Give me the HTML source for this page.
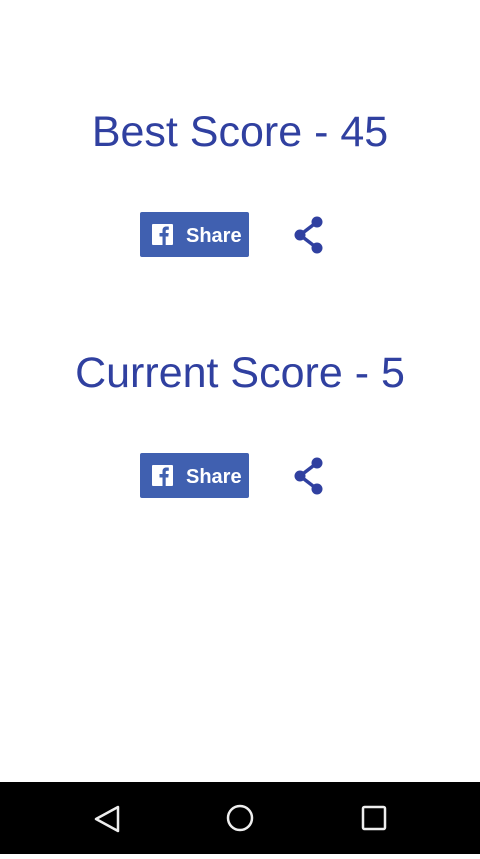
<!DOCTYPE html>
<html><head><style>
body{margin:0;width:480px;height:854px;background:#fff;position:relative;overflow:hidden;font-family:"Liberation Sans",Roboto,sans-serif}
.t{position:absolute;left:0;width:480px;text-align:center;color:#3040a0;font-size:43px;line-height:50px;letter-spacing:0px}
.btn{position:absolute;left:140px;width:109px;height:45px;background:#4060b0;border-radius:2px}
.btn .f{position:absolute;left:12px;top:12px;width:21px;height:21px;background:#fff;border-radius:1px;overflow:hidden}
.btn span{position:absolute;left:46px;top:13px;color:#fff;font-weight:bold;font-size:20px;line-height:22px}
svg.s{position:absolute;left:292px}
.nav{position:absolute;left:0;top:782px;width:480px;height:72px;background:#000}
</style></head><body>
<div class="t" style="top:107px">Best Score - 45</div>
<div class="btn" style="top:212px"><div class="f"><svg width="21" height="21" viewBox="0 0 21 21"><path d="M10.5 21V12.5H7.5V9H10.5V6.5C10.5 3.8 12 2.5 14.5 2.5c1.1 0 2 .1 2.3.1V5.7h-1.6c-1.2 0-1.5.6-1.5 1.5V9h3l-.4 3.5h-2.6V21z" fill="#4060b0"/></svg></div><span>Share</span></div>
<svg class="s" style="top:215px" width="36" height="40" viewBox="0 0 36 40"><g fill="#3040a0" stroke="#3040a0"><line x1="8" y1="20" x2="25" y2="7" stroke-width="3.5"/><line x1="8" y1="20" x2="25" y2="33" stroke-width="3.5"/><circle cx="25" cy="7" r="5.5" stroke="none"/><circle cx="8" cy="20" r="5.5" stroke="none"/><circle cx="25" cy="33" r="5.5" stroke="none"/></g></svg>
<div class="t" style="top:348px">Current Score - 5</div>
<div class="btn" style="top:453px"><div class="f"><svg width="21" height="21" viewBox="0 0 21 21"><path d="M10.5 21V12.5H7.5V9H10.5V6.5C10.5 3.8 12 2.5 14.5 2.5c1.1 0 2 .1 2.3.1V5.7h-1.6c-1.2 0-1.5.6-1.5 1.5V9h3l-.4 3.5h-2.6V21z" fill="#4060b0"/></svg></div><span>Share</span></div>
<svg class="s" style="top:456px" width="36" height="40" viewBox="0 0 36 40"><g fill="#3040a0" stroke="#3040a0"><line x1="8" y1="20" x2="25" y2="7" stroke-width="3.5"/><line x1="8" y1="20" x2="25" y2="33" stroke-width="3.5"/><circle cx="25" cy="7" r="5.5" stroke="none"/><circle cx="8" cy="20" r="5.5" stroke="none"/><circle cx="25" cy="33" r="5.5" stroke="none"/></g></svg>
<div class="nav"><svg width="480" height="72" viewBox="0 0 480 72"><g fill="none" stroke="#eee" stroke-width="2.5" stroke-linejoin="round"><path d="M118 25V49L96 37Z"/><circle cx="240" cy="36" r="12"/><rect x="363" y="25" width="22" height="22" rx="1.5"/></g></svg></div>
</body></html>
